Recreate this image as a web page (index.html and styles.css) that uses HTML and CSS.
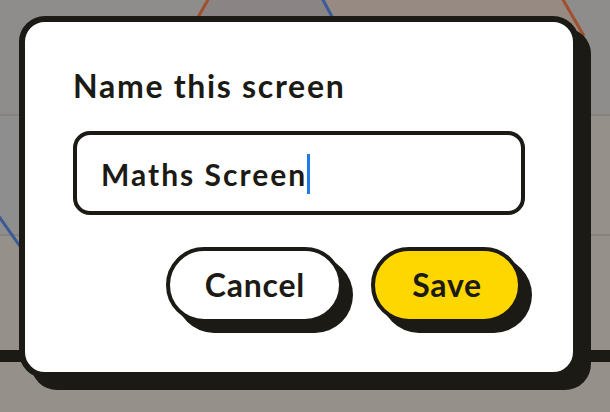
FILE: index.html
```html
<!DOCTYPE html>
<html lang="en">
<head>
<meta charset="utf-8">
<title>Name this screen</title>
<link rel="stylesheet" href="styles.css">
</head>
<body>
<svg class="backdrop" viewBox="0 0 610 412" width="610" height="412" aria-hidden="true">
  <rect width="610" height="412" fill="#95918a"/>
  <rect width="610" height="115" fill="#8e8d8b"/>
  <rect x="0" y="115" width="300" height="120" fill="#8e8e8e"/>
  <polygon points="208,0 323,0 340,30 190,30" fill="#8b8485"/>
  <polygon points="323,0 563,0 582,33 340,30" fill="#978a82"/>
  <rect x="0" y="114" width="610" height="2" fill="#83827f"/>
  <rect x="0" y="234" width="610" height="2" fill="#85837f"/>
  <line x1="209" y1="-2" x2="193" y2="26" stroke="#a24f2b" stroke-width="3"/>
  <line x1="562" y1="-2" x2="584" y2="36" stroke="#a24f2b" stroke-width="3"/>
  <line x1="322" y1="-2" x2="337" y2="26" stroke="#3b5a96" stroke-width="3"/>
  <line x1="-2" y1="215" x2="24" y2="252" stroke="#3b5a96" stroke-width="3"/>
  <rect x="0" y="350" width="610" height="12" fill="#1c1a15"/>
</svg>

<div class="dialog">
  <h1 class="dialog-title">Name this screen</h1>
  <div class="field">
    <span class="field-text">Maths Screen</span><span class="caret"></span>
  </div>
  <div class="actions">
    <button class="btn btn-cancel">Cancel</button>
    <button class="btn btn-save">Save</button>
  </div>
</div>
</body>
</html>
```

FILE: styles.css
```css
html, body {
  margin: 0;
  width: 610px;
  height: 412px;
  overflow: hidden;
}

body {
  position: relative;
  box-sizing: border-box;
  padding: 16px 0 0 19px;
  font-family: "Lato", "Noto Sans", sans-serif;
  color: #1c1a15;
}

.backdrop {
  position: absolute;
  left: 0;
  top: 0;
  z-index: 0;
  display: block;
}

.dialog {
  position: relative;
  z-index: 1;
  box-sizing: border-box;
  width: 560px;
  height: 362px;
  background: #ffffff;
  border: 6px solid #1c1a15;
  border-radius: 26px;
  box-shadow: 12px 12px 0 #1c1a15;
  padding: 44px 48px 0 48px;
  display: flex;
  flex-direction: column;
}

.dialog-title {
  margin: 0 0 25px 0;
  font-size: 32px;
  line-height: 40px;
  font-weight: 700;
  letter-spacing: 1.7px;
}

.field {
  box-sizing: border-box;
  height: 84px;
  border: 4px solid #1c1a15;
  border-radius: 17px;
  padding: 0 24px 0 24px;
  display: flex;
  align-items: center;
}

.field-text {
  font-size: 30px;
  font-weight: 700;
  line-height: 40px;
  padding-top: 2px;
  letter-spacing: 2px;
}

.caret {
  display: inline-block;
  width: 3px;
  height: 40px;
  margin-left: 0;
  margin-top: 2px;
  background: #1e7ae6;
}

.actions {
  margin-top: 32px;
  margin-right: 3px;
  display: flex;
  justify-content: flex-end;
  gap: 28px;
}

.btn {
  box-sizing: border-box;
  height: 76px;
  padding: 0 34px 0 35px;
  border: 4px solid #1c1a15;
  border-radius: 40px;
  box-shadow: 10px 10px 0 #1c1a15;
  font-family: inherit;
  font-size: 32px;
  font-weight: 700;
  color: #1c1a15;
  line-height: 40px;
  letter-spacing: 0.8px;
  cursor: pointer;
}

.btn-cancel {
  background: #ffffff;
}

.btn-save {
  background: #ffd700;
  padding: 0 36px 0 37px;
}
```
